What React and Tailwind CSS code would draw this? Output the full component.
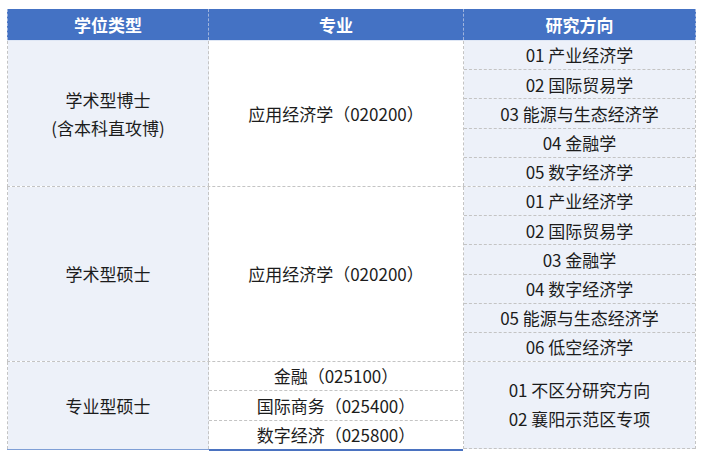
import React from "react";

const font = { fontFamily: '"Noto Sans CJK SC", "Noto Sans", sans-serif' };

function Cell({ children, className = "" }) {
  return (
    <div className={"flex items-center justify-center text-center " + className}>
      {children}
    </div>
  );
}

function Stack({ items, bg = "", className = "" }) {
  return (
    <div className={"flex flex-col " + className}>
      {items.map((t, i) => (
        <Cell
          key={i}
          className={
            "flex-1 " +
            bg +
            (i < items.length - 1 ? " border-b border-dashed border-[#c4c4c4]" : "")
          }
        >
          {t}
        </Cell>
      ))}
    </div>
  );
}

export default function App() {
  const g1 = ["01 产业经济学", "02 国际贸易学", "03 能源与生态经济学", "04 金融学", "05 数字经济学"];
  const g2 = ["01 产业经济学", "02 国际贸易学", "03 金融学", "04 数字经济学", "05 能源与生态经济学", "06 低空经济学"];
  return (
    <div className="w-[703px] h-[456px] bg-white pt-[9px] pl-[7px] text-[17px] text-[#1c1c1c]" style={font}>
      <div className="w-[689px] flex flex-col">
        <div className="flex h-[31px] bg-[#4472c4] text-white font-bold border-l border-r border-dashed border-[#9fb3dc]">
          <Cell className="w-[201px] border-r border-dashed border-[#9fb3dc]">学位类型</Cell>
          <Cell className="w-[255px] border-r border-dashed border-[#9fb3dc]">专业</Cell>
          <Cell className="flex-1">研究方向</Cell>
        </div>
        <div className="h-[1px] bg-[#dfe7f5]" />
        <div className="flex h-[146px] border-l border-r border-b border-dashed border-[#c4c4c4]">
          <Cell className="w-[201px] bg-[#edf1f9] border-r border-dashed border-[#c4c4c4] leading-[28px] flex-col">
            <span>学术型博士</span>
            <span>(含本科直攻博)</span>
          </Cell>
          <Cell className="w-[255px] bg-white border-r border-dashed border-[#c4c4c4]">应用经济学（020200）</Cell>
          <Stack items={g1} bg="bg-[#edf1f9]" className="flex-1" />
        </div>
        <div className="flex h-[175px] border-l border-r border-b border-dashed border-[#c4c4c4]">
          <Cell className="w-[201px] bg-[#edf1f9] border-r border-dashed border-[#c4c4c4]">学术型硕士</Cell>
          <Cell className="w-[255px] bg-white border-r border-dashed border-[#c4c4c4]">应用经济学（020200）</Cell>
          <Stack items={g2} bg="bg-[#edf1f9]" className="flex-1" />
        </div>
        <div className="flex h-[87px] border-l border-r border-dashed border-[#c4c4c4]">
          <Cell className="w-[201px] bg-[#edf1f9] border-r border-dashed border-[#c4c4c4]">专业型硕士</Cell>
          <Stack
            items={["金融（025100）", "国际商务（025400）", "数字经济（025800）"]}
            bg="bg-white"
            className="w-[255px] border-r border-[#c4c4c4] border-dashed"
          />
          <Cell className="flex-1 bg-[#edf1f9] flex-col leading-[29px] border-b border-dashed border-[#c4c4c4] pb-[3px]">
            <span>01 不区分研究方向</span>
            <span>02 襄阳示范区专项</span>
          </Cell>
        </div>
        <div className="flex items-start">
          <div className="w-[202px] h-[1px] bg-[#7f9fd6]" />
          <div className="w-[254px] h-[2px] bg-[#4a72c0]" />
        </div>
      </div>
    </div>
  );
}
